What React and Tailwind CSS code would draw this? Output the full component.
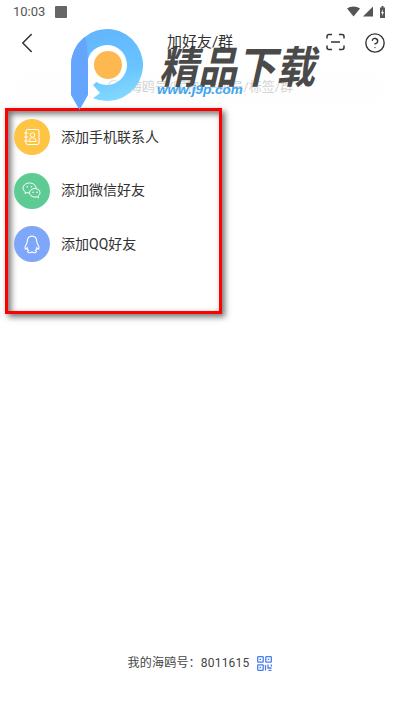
import React from 'react';
import { ChevronLeft, CircleHelp } from 'lucide-react';

const ContactIcon = () => (
    <svg width="18" height="18" viewBox="0 0 18 18" fill="none" stroke="white" strokeWidth="1">
        <rect x="3" y="1.500" width="13" height="15" rx="1.500" />
        <path d="M1.500 5h3M1.500 9h3M1.500 13h3" strokeLinecap="round" />
        <circle cx="9.500" cy="7" r="2.300" />
        <path d="M5.800 13.500c.2-2.400 1.700-3.800 3.700-3.800s3.500 1.400 3.700 3.800Z" />
    </svg>
);

const WechatIcon = () => (
    <svg width="20" height="18" viewBox="0 0 20 18" fill="none" stroke="white" strokeWidth="1">
        <path d="M7.500 1C3.900 1 1 3.200 1 6c0 1.600.9 3 2.400 3.900L3 11.500l1.900-1c.8.300 1.700.5 2.600.5 3.600 0 6.500-2.200 6.500-5S11.100 1 7.500 1Z" />
        <path d="M13 6.500c-3 0-5.500 1.900-5.500 4.300s2.500 4.300 5.500 4.300c.7 0 1.300-.1 1.900-.3l1.700 1-.4-1.700c1.100-.8 1.800-2 1.800-3.300 0-2.400-2.200-4.300-5-4.300Z" fill="#5ecb94" />
        <circle cx="5.200" cy="4.800" r="0.800" fill="white" stroke="none" />
        <circle cx="9.500" cy="4.800" r="0.800" fill="white" stroke="none" />
        <circle cx="11" cy="10.200" r="0.800" fill="white" stroke="none" />
        <circle cx="15" cy="10.200" r="0.800" fill="white" stroke="none" />
    </svg>
);

const QQIcon = () => (
    <svg width="18" height="19" viewBox="0 0 16 17" fill="none" stroke="white" strokeWidth="1">
        <path d="M8 1C5 1 3.800 3.200 3.800 5.500C3.800 7 3 8 2.300 9.500C1.600 11 1.600 12.500 2.200 12.700C2.700 12.900 3.300 12.200 3.700 11.500C4 12.600 4.400 13.300 5 13.900C3.800 14.300 3.500 15.900 5.500 15.900C6.800 15.900 7.500 15.400 8 15.100C8.500 15.400 9.200 15.900 10.500 15.900C12.500 15.900 12.200 14.300 11 13.900C11.600 13.300 12 12.600 12.300 11.500C12.700 12.200 13.300 12.900 13.800 12.700C14.400 12.500 14.400 11 13.700 9.500C13 8 12.200 7 12.200 5.500C12.200 3.200 11 1 8 1Z" />
    </svg>
);

const LogoMark = () => (
    <svg width="72" height="82" viewBox="0 0 72 82">
        <defs>
            <linearGradient id="ring" x1="0.3" y1="0" x2="0.5" y2="1">
                <stop offset="0" stopColor="#62b5fd" />
                <stop offset="0.6" stopColor="#68c4ff" />
                <stop offset="1" stopColor="#82d8ff" />
            </linearGradient>
        </defs>
        <path d="M0 36A36 36 0 1 1 22 69.200L29 64L22 56L25.300 52.900A20 20 0 1 0 16 36Z" fill="url(#ring)" />
        <path d="M0 36C0 24 6 14 14 8C16 14 17 25 17 36V66L8.500 81L0 66Z" fill="#66a5fd" />
        <circle cx="37" cy="36" r="14" fill="#fdb94f" />
    </svg>
);

const Watermark = () => (
    <div className="absolute left-[71px] top-[29px] w-[265px] h-[82px]">
        <LogoMark />
        <div className="absolute left-[88px] top-[6px] text-[39px] leading-[58px] font-bold italic text-[#4a4a4a] whitespace-nowrap scale-y-[1.12] font-['Noto_Sans_CJK_SC',sans-serif]">
            精品下载
        </div>
        <div className="absolute left-[86px] top-[52px] text-[13.500px] leading-[18px] font-bold italic text-[#3ea6f0] whitespace-nowrap font-['Liberation_Sans',sans-serif]">
            www.j9p.com
        </div>
    </div>
);

const rows = [
    { label: '添加手机联系人', color: 'bg-[#fec544]', icon: <ContactIcon /> },
    { label: '添加微信好友', color: 'bg-[#5ecb94]', icon: <WechatIcon /> },
    { label: '添加QQ好友', color: 'bg-[#7ea6f9]', icon: <QQIcon /> },
];

export default function App() {
    return (
        <div className="relative flex flex-col w-[400px] h-[712px] overflow-hidden bg-white font-['Roboto','Noto_Sans_CJK_SC',sans-serif]">
            <div className="flex items-center h-[23px] pl-[13px] pr-[13px] text-[#555555]">
                <span className="text-[13px] leading-none">10:03</span>
                <span className="ml-[10px] w-[12px] h-[12px] rounded-[1px] bg-[#666666]" />
                <svg className="ml-auto" width="40" height="14" viewBox="0 0 40 14" fill="#555555">
                    <path d="M0 3.500C3.500.8 9.500.8 13 3.500L6.500 11.500Z" />
                    <path d="M16 11.500L26 1.500V11.500Z" />
                    <path d="M33 2.500h1.500V1h2v1.500H38V13h-5Z" />
                    <path d="M36 4L34 8.200h1.300L35 11l2-4h-1.300Z" fill="white" />
                </svg>
            </div>

            <div className="relative z-10 flex items-center justify-center h-[39px]">
                <ChevronLeft className="absolute left-[10px] top-[3px]" size={34} color="#333333" strokeWidth={1.1} />
                <span className="text-[15px] text-[#333333]">加好友/群</span>
                <svg className="absolute left-[326px] top-[10px]" width="19" height="18" viewBox="0 0 19 18" fill="none" stroke="#333333" strokeWidth="1.500">
                    <path d="M6 1.500H3A2 2 0 0 0 1 3.500V5.500M13 1.500H16A2 2 0 0 1 18 3.500V5.500M1 12.500V14.500A2 2 0 0 0 3 16.500H6M18 12.500V14.500A2 2 0 0 1 16 16.500H13M5 9H14" />
                </svg>
                <CircleHelp className="absolute left-[364px] top-[9px]" size={22} color="#333333" strokeWidth={1.5} />
            </div>

            <div className="flex items-center justify-center gap-[6px] h-[32px] mt-[9px] mx-[15px] rounded-full bg-[#fefefe] text-[13px] text-[#d4d4d4]">
                <svg width="16" height="16" viewBox="0 0 16 16" fill="none" stroke="#dddddd" strokeWidth="1.200">
                    <circle cx="7" cy="7" r="5.500" />
                    <path d="M11 11l4 4" />
                </svg>
                <span>海鸥号/昵称/手机号/标签/群</span>
            </div>

            <div className="flex flex-col gap-[17.5px] w-[217px] h-[206px] mt-[5px] ml-[5px] pt-[8px] pl-[6px] border-[3px] border-[#ff0000] bg-white shadow-[3px_3px_6px_rgba(0,0,0,0.55),inset_3px_3px_6px_rgba(0,0,0,0.55)]">
                {rows.map((row) => (
                    <div key={row.label} className="flex items-center gap-[11px] h-[36px]">
                        <div className={`flex items-center justify-center w-[36px] h-[36px] rounded-full ${row.color}`}>
                            {row.icon}
                        </div>
                        <span className="text-[14px] text-[#333333]">{row.label}</span>
                    </div>
                ))}
            </div>

            <div className="flex items-center justify-center gap-[8px] mt-auto mb-[40px] text-[12px] tracking-[0.2px] text-[#444444]">
                <span>我的海鸥号：8011615</span>
                <svg width="15" height="15" viewBox="0 0 15 15" fill="none" stroke="#4a7df0" strokeWidth="1.300">
                    <rect x="0.700" y="0.700" width="5.500" height="5.500" rx="0.500" />
                    <rect x="8.800" y="0.700" width="5.500" height="5.500" rx="0.500" />
                    <rect x="0.700" y="8.800" width="5.500" height="5.500" rx="0.500" />
                    <path d="M8.500 9v5.500M11 8.500v3.500h3.500M11.500 14.300h3M14.300 8.500v2" />
                    <path d="M2.500 3.400h1.500M10.700 3.400h1.500M2.500 11.500h1.500" />
                </svg>
            </div>

            <Watermark />
        </div>
    );
}
